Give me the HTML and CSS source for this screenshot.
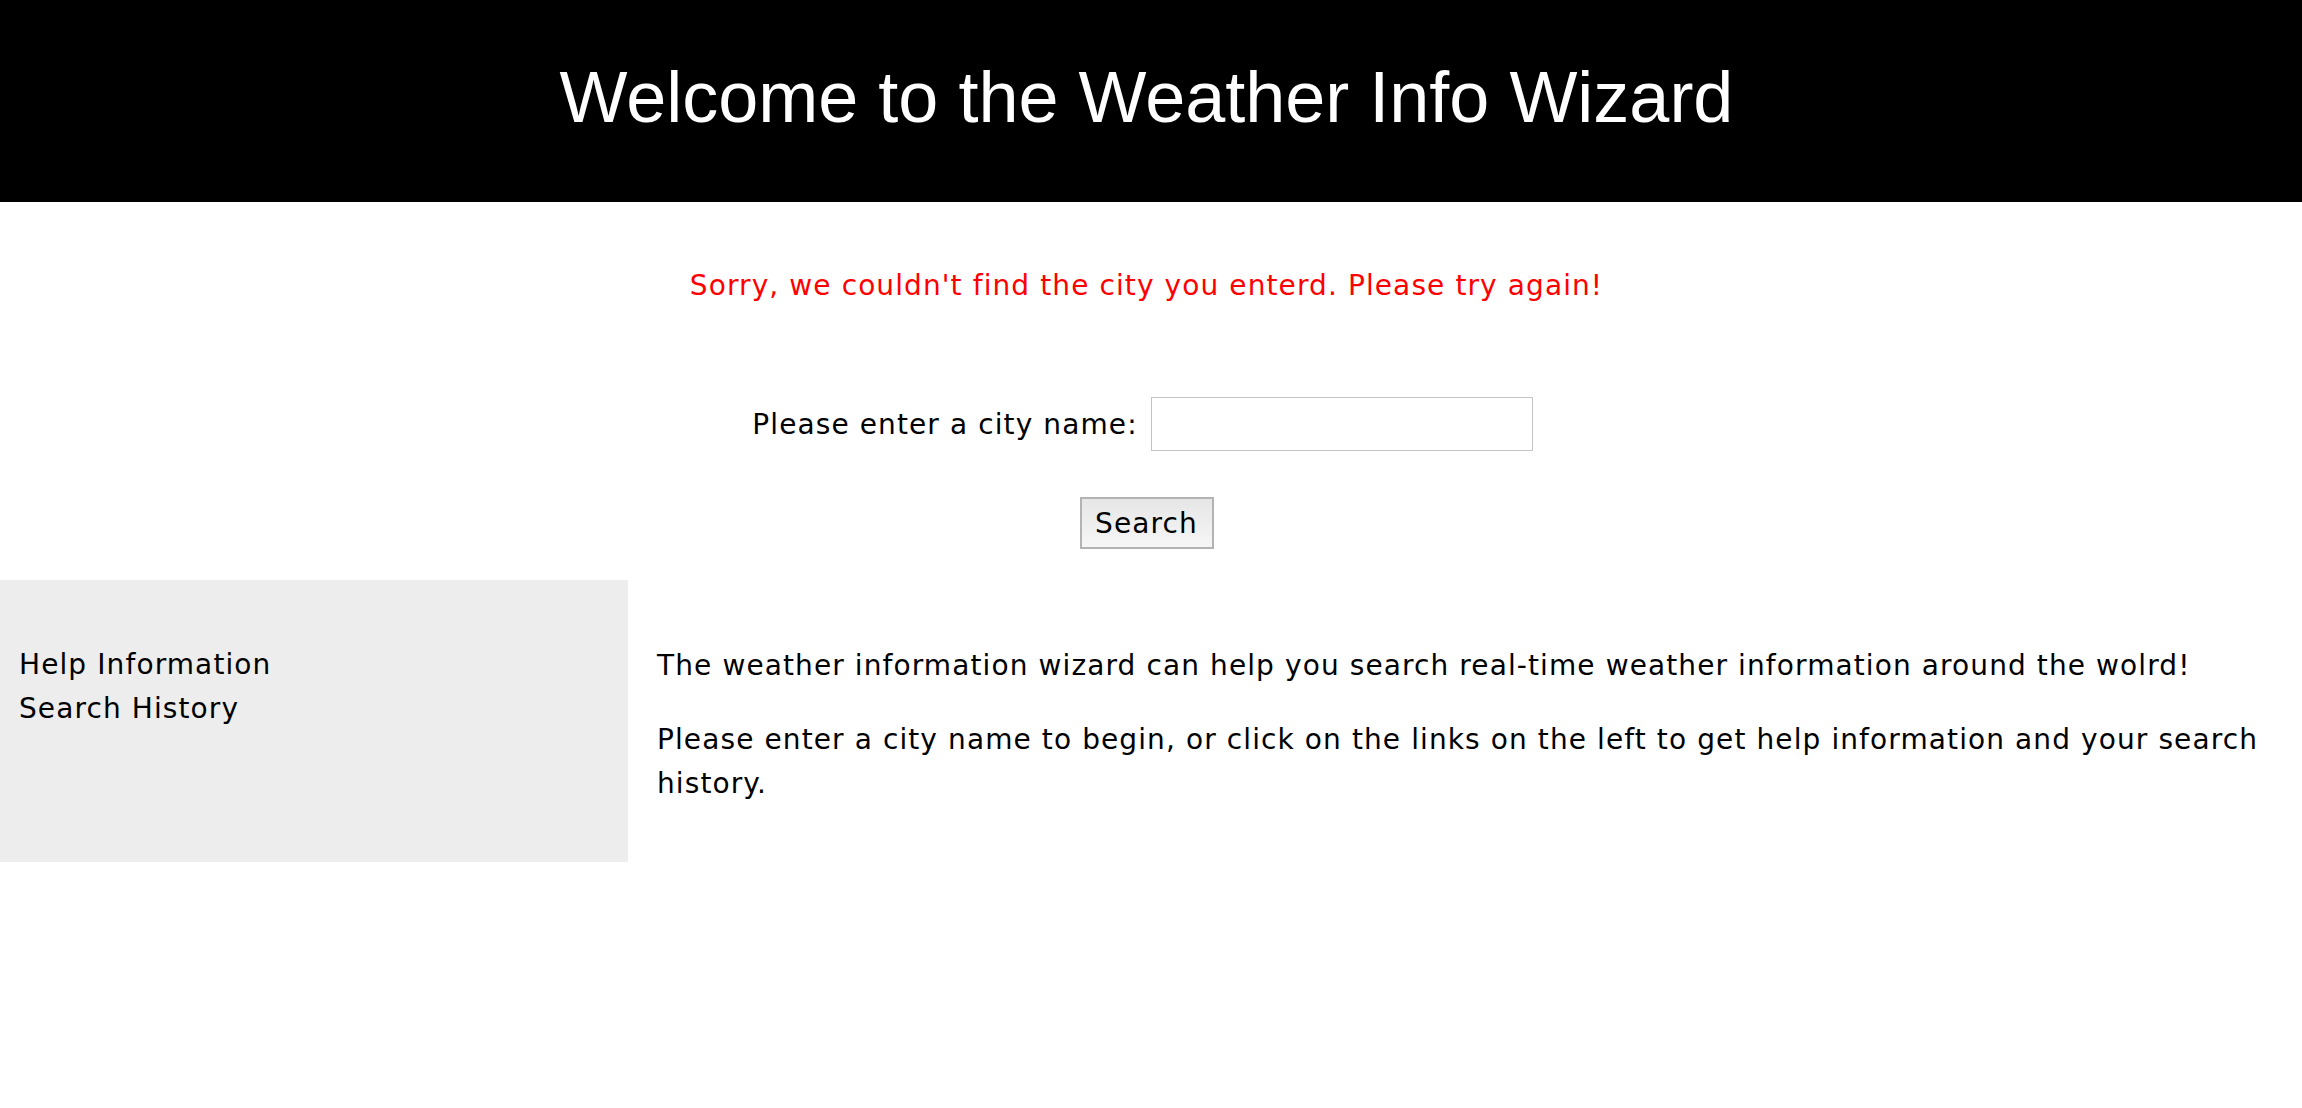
FILE: index.html
```html
<!DOCTYPE html>
<html lang="en">
<head>
<meta charset="utf-8">
<title>Weather Info Wizard</title>
<link rel="stylesheet" href="styles.css">
</head>
<body>
<header class="site-header">
  <h1 class="site-title">Welcome to the Weather Info Wizard</h1>
</header>
<section class="search">
  <p class="error">Sorry, we couldn't find the city you enterd. Please try again!</p>
  <form class="search-form">
    <div class="field-row">
      <label class="field-label" for="city">Please enter a city name:</label>
      <input class="field-input" id="city" type="text">
    </div>
    <div class="button-row">
      <button class="search-btn" type="button">Search</button>
    </div>
  </form>
</section>
<section class="lower">
  <nav class="sidebar">
    <a class="side-link" href="#">Help Information</a>
    <a class="side-link" href="#">Search History</a>
  </nav>
  <main class="content">
    <p class="content-p">The weather information wizard can help you search real-time weather information around the wolrd!</p>
    <p class="content-p">Please enter a city name to begin, or click on the links on the left to get help information and your search history.</p>
  </main>
</section>
</body>
</html>
```
FILE: styles.css
```css
html, body {
  margin: 0;
  padding: 0;
  background: #fff;
}
body {
  font-family: "DejaVu Sans", Verdana, sans-serif;
  font-size: 28px;
  letter-spacing: 1.1px;
  line-height: 44px;
  color: #000;
}
.site-header {
  background: #000;
  height: 202px;
  box-sizing: border-box;
  padding: 57px 9px 0 0;
}
.site-title {
  margin: 0;
  font-family: "Liberation Sans", Arial, sans-serif;
  font-weight: normal;
  font-size: 72px;
  letter-spacing: 0;
  line-height: 80px;
  color: #fff;
  text-align: center;
}
.search {
  padding: 62px 9px 0 0;
  text-align: center;
}
.error {
  margin: 0;
  color: #ff0000;
}
.search-form {
  margin: 0;
}
.field-row {
  display: flex;
  justify-content: center;
  align-items: center;
  gap: 13px;
  margin-top: 89px;
  padding-right: 8px;
}
.field-label {
  padding-top: 2px;
}
.field-input {
  width: 382px;
  height: 54px;
  box-sizing: border-box;
  border: 1px solid #c4c4c4;
  font: inherit;
  margin: 0;
  padding: 0 6px;
}
.button-row {
  display: flex;
  justify-content: center;
  margin-top: 46px;
}
.search-btn {
  width: 134px;
  height: 52px;
  box-sizing: border-box;
  border: 2px solid #b3b3b3;
  background: linear-gradient(#e6e6e6, #f6f6f6);
  font: inherit;
  letter-spacing: 1.1px;
  color: #000;
  padding: 2px 0 0;
  margin: 0;
}
.lower {
  display: flex;
  margin-top: 31px;
}
.sidebar {
  width: 628px;
  flex: none;
  height: 282px;
  box-sizing: border-box;
  background: #ededed;
  padding: 63px 19px 0;
  display: flex;
  flex-direction: column;
}
.side-link {
  color: #000;
  text-decoration: none;
}
.content {
  flex: 1;
  padding: 36px 29px 0;
}
.content-p {
  margin: 28px 0 30px;
}
```
